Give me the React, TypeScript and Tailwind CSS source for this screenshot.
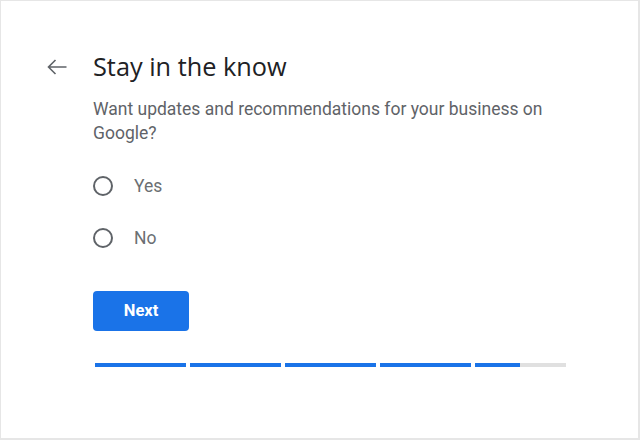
const options = ["Yes", "No"];

const ArrowBack = () => (
  <svg width="20" height="16" viewBox="0 0 20 16" fill="none" className="text-[#5f6368]">
    <path d="M19.5 8H1.5M8.5 1L1.5 8l7 7" stroke="currentColor" strokeWidth="1.6" />
  </svg>
);

const Radio = ({ label }: { label: string }) => (
  <label className="flex h-[52px] items-center">
    <span className="h-5 w-5 rounded-full border-2 border-[#5f6368]" />
    <span className="ml-[21px] text-[17.5px] text-[#6b6f73]">{label}</span>
  </label>
);

const Progress = () => (
  <div className="flex w-[471px] gap-1">
    {[100, 100, 100, 100, 49].map((v, i) => (
      <div key={i} className="h-1 flex-1 bg-[#e0e0e0]">
        <div className="h-full bg-[#1a73e8]" style={{ width: `${v}%` }} />
      </div>
    ))}
  </div>
);

export default function App() {
  return (
    <div
      className="h-[440px] w-[640px] overflow-hidden border-t border-l border-r-2 border-b-2 border-[#e6e6e6] bg-white"
      style={{ fontFamily: "Roboto, 'Liberation Sans', sans-serif" }}
    >
      <div className="flex pt-[49px] pl-[46px]">
        <div className="flex h-8 w-[46px] items-center pt-[1px]">
          <ArrowBack />
        </div>
        <div className="flex flex-col">
          <h1
            className="h-8 text-[25.3px] leading-8 text-[#202124]"
            style={{ fontFamily: "'Open Sans', Roboto, sans-serif" }}
          >
            Stay in the know
          </h1>
          <p className="mt-[15px] w-[480px] text-[17.5px] leading-6 text-[#5f6368]">
            Want updates and recommendations for your business on Google?
          </p>
          <div className="mt-[15px] flex flex-col">
            {options.map((o) => (
              <Radio key={o} label={o} />
            ))}
          </div>
          <button className="mt-[27px] h-10 w-24 rounded bg-[#1a73e8] text-[16.5px] font-bold text-white">
            Next
          </button>
          <div className="mt-[32px] pl-[2px]">
            <Progress />
          </div>
        </div>
      </div>
    </div>
  );
}
